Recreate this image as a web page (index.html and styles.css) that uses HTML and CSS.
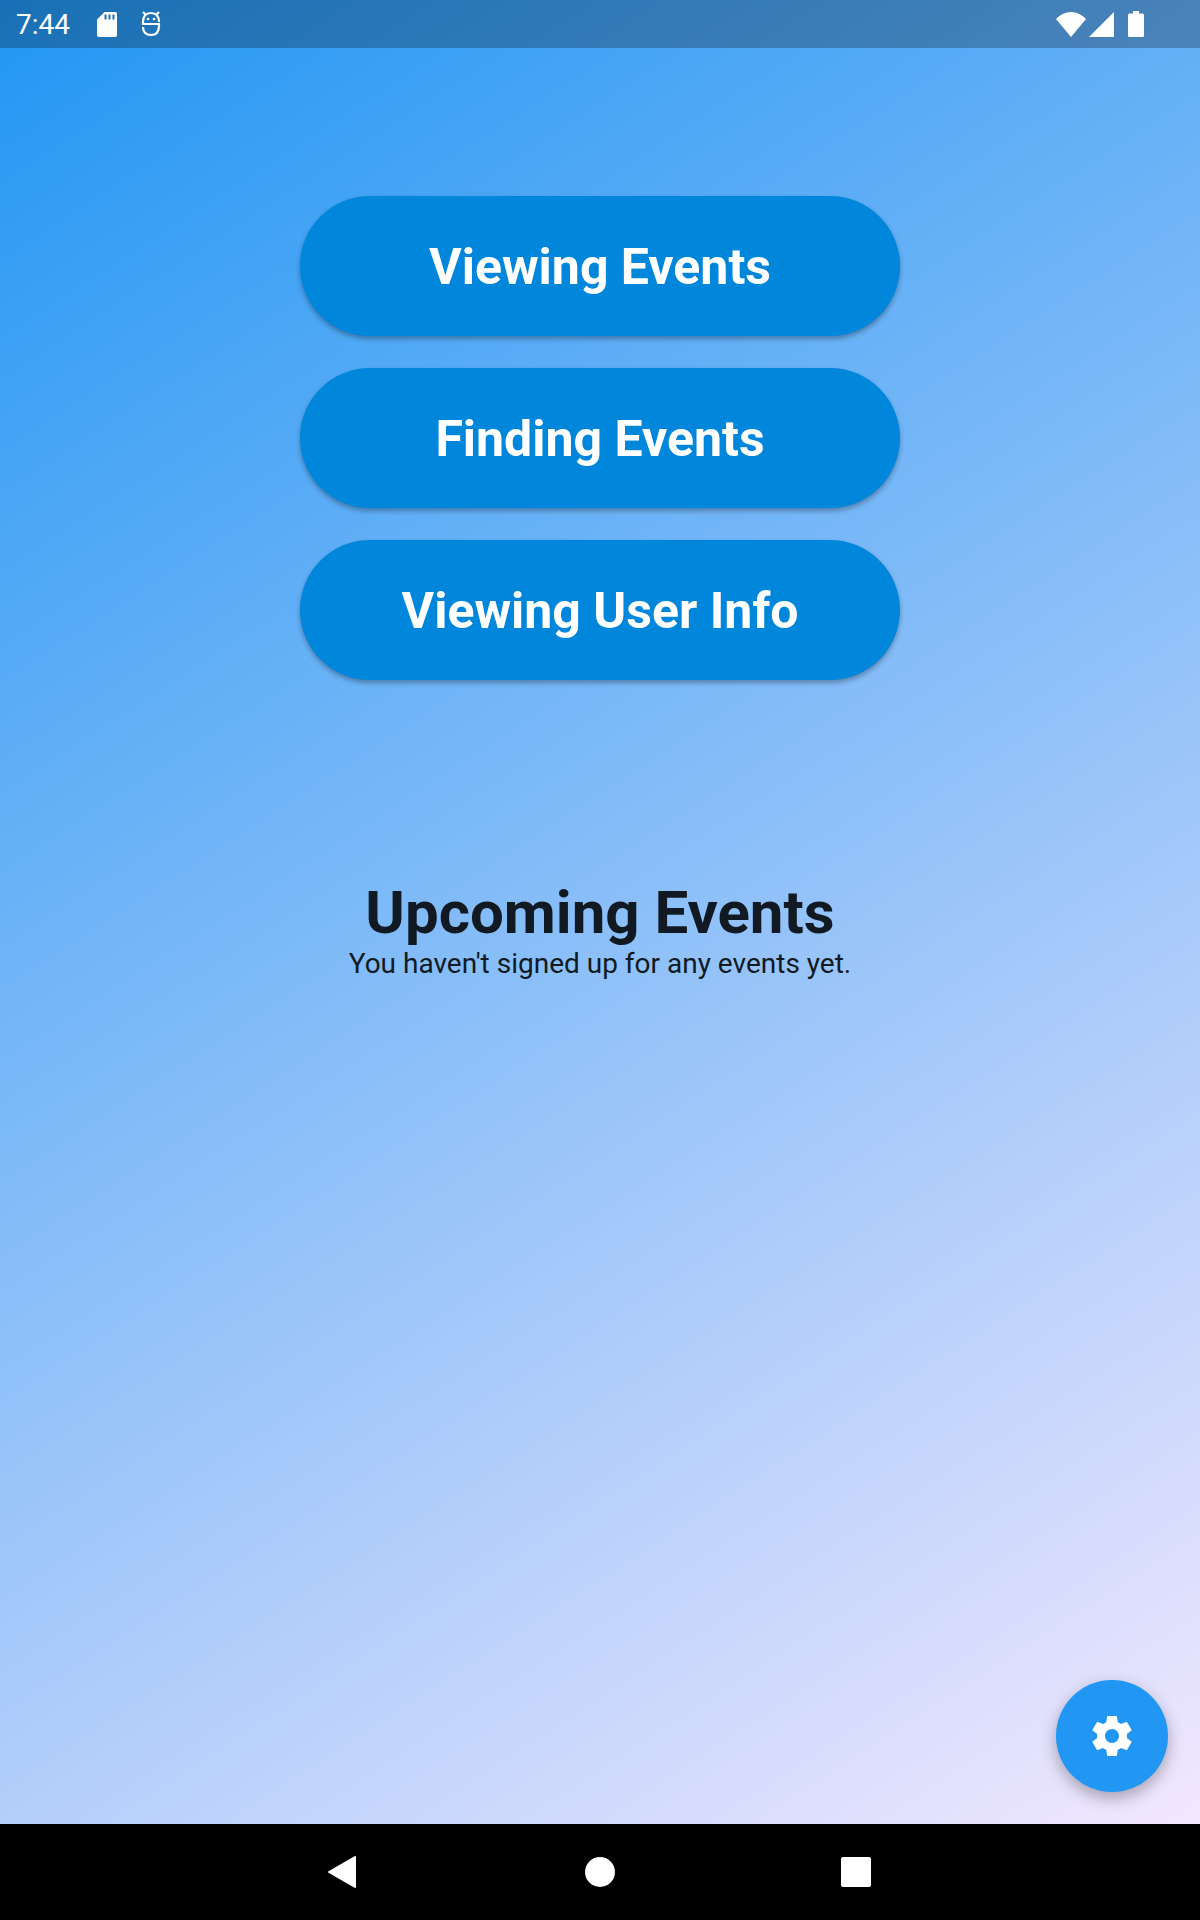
FILE: index.html
```html
<!DOCTYPE html>
<html lang="en">
<head>
  <meta charset="UTF-8">
  <meta name="viewport" content="width=device-width, initial-scale=1.0">
  <title>Events</title>
  <link rel="stylesheet" href="styles.css">
</head>
<body>

<div class="screen">
  <header class="status-bar">
    <span class="time">7:44</span>
    <!-- sd card -->
    <svg class="sd-icon" viewBox="0 0 20 25" width="20" height="25" aria-hidden="true">
      <path fill="#fff" fill-rule="evenodd" d="M7.500 0H18a2 2 0 0 1 2 2v21a2 2 0 0 1-2 2H2a2 2 0 0 1-2-2V7.500zM7.500 2.500v5h2v-5zM11.500 2.500v5h2v-5zM15.500 2.500v5h2v-5z"/>
    </svg>
    <!-- debug head -->
    <svg class="debug-icon" viewBox="0 0 20 26" width="20" height="26" aria-hidden="true">
      <g fill="none" stroke="#fff" stroke-width="2.200">
        <path d="M2 1l3 3M18 1l-3 3"/>
        <path d="M18 11C18 5 15 2 10 2S2 5 2 11v2h16v2c0 6-3 9-8 9s-8-3-8-8"/>
      </g>
      <circle cx="7" cy="8" r="1.300" fill="#fff"/>
      <circle cx="13" cy="8" r="1.300" fill="#fff"/>
    </svg>
    <div class="status-right">
      <svg viewBox="0 0 30 25" width="30" height="25" aria-hidden="true">
        <path fill="#fff" d="M15 25L0 7C4 3 9 0 15 0s11 3 15 7z"/>
      </svg>
      <svg viewBox="0 0 25 25" width="25" height="25" aria-hidden="true">
        <path fill="#fff" d="M25 0v25H0z"/>
      </svg>
      <svg class="battery-icon" viewBox="0 0 16 26" width="16" height="26" aria-hidden="true">
        <path fill="#fff" d="M5 0h6v2.500h3.500A1.500 1.500 0 0 1 16 4v20.500a1.500 1.500 0 0 1-1.500 1.500h-13A1.500 1.500 0 0 1 0 24.500V4a1.500 1.500 0 0 1 1.500-1.500H5z"/>
      </svg>
    </div>
  </header>

  <main>
    <div class="menu">
      <button type="button">Viewing Events</button>
      <button type="button">Finding Events</button>
      <button type="button">Viewing User Info</button>
    </div>

    <section class="upcoming">
      <h1>Upcoming Events</h1>
      <p>You haven't signed up for any events yet.</p>
    </section>
  </main>

  <button type="button" class="fab" aria-label="Settings">
    <svg viewBox="0 0 24 24" width="48" height="48" aria-hidden="true">
      <path fill="#fff" d="M19.430 12.980c.04-.32.07-.64.07-.98s-.03-.66-.07-.98l2.110-1.650c.19-.15.24-.42.12-.64l-2-3.460c-.12-.22-.39-.3-.61-.22l-2.490 1c-.52-.4-1.080-.73-1.690-.98l-.38-2.650C14.460 2.180 14.250 2 14 2h-4c-.25 0-.46.18-.49.42l-.38 2.650c-.61.25-1.170.59-1.690.98l-2.490-1c-.23-.09-.49 0-.61.22l-2 3.460c-.13.22-.07.49.12.64l2.110 1.650c-.04.32-.07.65-.07.98s.03.66.07.98l-2.110 1.650c-.19.15-.24.42-.12.64l2 3.460c.12.22.39.3.61.22l2.490-1c.52.4 1.080.73 1.690.98l.38 2.650c.03.24.24.42.49.42h4c.25 0 .46-.18.49-.42l.38-2.650c.61-.25 1.170-.59 1.690-.98l2.490 1c.23.09.49 0 .61-.22l2-3.460c.12-.22.07-.49-.12-.64l-2.110-1.650zM12 15.500c-1.930 0-3.500-1.570-3.500-3.500s1.570-3.500 3.500-3.500 3.500 1.570 3.500 3.500-1.570 3.500-3.500 3.500z"/>
    </svg>
  </button>
</div>

<nav class="nav-bar">
  <button type="button" aria-label="Back">
    <svg viewBox="0 0 32 32" width="32" height="32" aria-hidden="true">
      <path fill="#fff" stroke="#fff" stroke-width="2" stroke-linejoin="round" d="M27 1v30L1 16z"/>
    </svg>
  </button>
  <button type="button" aria-label="Home">
    <svg viewBox="0 0 32 32" width="32" height="32" aria-hidden="true">
      <circle cx="16" cy="16" r="15" fill="#fff"/>
    </svg>
  </button>
  <button type="button" aria-label="Recent apps">
    <svg viewBox="0 0 32 32" width="32" height="32" aria-hidden="true">
      <rect x="1" y="1" width="30" height="30" rx="2" fill="#fff"/>
    </svg>
  </button>
</nav>

</body>
</html>
```
FILE: styles.css
```css
* {
  box-sizing: border-box;
}

body {
  margin: 0;
  min-height: 100vh;
  display: flex;
  flex-direction: column;
  font-family: Roboto, sans-serif;
  background: #000;
}

button {
  border: none;
  padding: 0;
  font-family: inherit;
  cursor: pointer;
}

svg {
  display: block;
}

.screen {
  position: relative;
  flex: 1;
  background: linear-gradient(147deg, #2196f3, #f2e7fe);
}

.status-bar {
  display: flex;
  align-items: center;
  height: 48px;
  padding: 0 56px 0 16px;
  background: rgba(0, 0, 0, 0.25);
  color: #fff;
}

.time {
  font-size: 28px;
  line-height: 32px;
  padding-top: 2px;
}

.sd-icon {
  margin-left: 27px;
}

.debug-icon {
  margin-left: 24px;
}

.status-right {
  display: flex;
  align-items: center;
  gap: 3px;
  margin-left: auto;
}

.battery-icon {
  margin-left: 11px;
}

main {
  display: flex;
  flex-direction: column;
  align-items: center;
  padding: 148px 0 160px;
}

.menu {
  display: flex;
  flex-direction: column;
  gap: 32px;
  width: 50%;
  min-width: 480px;
}

.menu button {
  height: 140px;
  padding-top: 2px;
  border-radius: 70px;
  background: #0086da;
  color: #fff;
  font-size: 50px;
  font-weight: 700;
  box-shadow: 0 3px 5px rgba(0, 0, 0, 0.3);
}

.upcoming {
  margin-top: 198px;
  text-align: center;
  color: #111a22;
}

.upcoming h1 {
  margin: 0;
  font-size: 60px;
  line-height: 70px;
  font-weight: 700;
}

.upcoming p {
  margin: 0;
  font-size: 28px;
  line-height: 32px;
}

.fab {
  position: absolute;
  right: 32px;
  bottom: 32px;
  display: grid;
  place-items: center;
  width: 112px;
  height: 112px;
  border-radius: 50%;
  background: #2196f3;
  box-shadow: 0 6px 16px rgba(0, 0, 0, 0.3);
}

.nav-bar {
  display: flex;
  justify-content: center;
  align-items: center;
  gap: 224px;
  height: 96px;
  background: #000;
}

.nav-bar button {
  background: none;
}
```
